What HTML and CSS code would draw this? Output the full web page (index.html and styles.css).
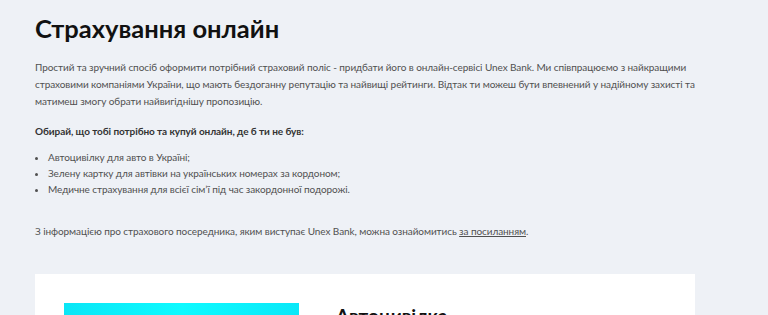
FILE: index.html
```html
<!DOCTYPE html>
<html lang="uk">
<head>
  <meta charset="UTF-8">
  <meta name="viewport" content="width=device-width, initial-scale=1.0">
  <title>Страхування онлайн</title>
  <link rel="stylesheet" href="styles.css">
</head>
<body>
  <div class="container">
    <h1>Страхування онлайн</h1>
    <p class="intro">Простий та зручний спосіб оформити потрібний страховий поліс - придбати його в онлайн-сервісі Unex Bank. Ми співпрацюємо з найкращими страховими компаніями України, що мають бездоганну репутацію та найвищі рейтинги. Відтак ти можеш бути впевнений у надійному захисті та матимеш змогу обрати найвигіднішу пропозицію.</p>

    <p class="lead">Обирай, що тобі потрібно та купуй онлайн, де б ти не був:</p>
    <ul class="list">
      <li>Автоцивілку для авто в Україні;</li>
      <li>Зелену картку для автівки на українських номерах за кордоном;</li>
      <li>Медичне страхування для всієї сім’ї під час закордонної подорожі.</li>
    </ul>

    <p class="note">З інформацією про страхового посередника, яким виступає Unex Bank, можна ознайомитись <a href="#">за посиланням</a>.</p>

    <div class="card">
      <div class="card-image"></div>
      <div class="card-body">
        <h2>Автоцивілка</h2>
      </div>
    </div>
  </div>
</body>
</html>
```

FILE: styles.css
```css
body {
  margin: 0;
  background-color: #eef1f6;
  font-family: Lato, "Noto Sans", Arial, sans-serif;
  color: #505050;
}
.container {
  width: 660px;
  padding: 11px 0 0 35px;
}
h1 {
  margin: 0 0 14px;
  font-size: 25.5px;
  font-weight: 700;
  color: #111;
  line-height: 34px;
}
.intro,
.lead,
.list,
.note {
  font-size: 10px;
  letter-spacing: -0.08px;
}
.intro {
  margin: 0 0 13px;
  line-height: 17px;
}
.lead {
  margin: 0 0 9px;
  font-weight: 700;
  line-height: 17px;
  color: #333;
}
.list {
  margin: 0 0 26px;
  padding-left: 13px;
  line-height: 16px;
}
.note {
  margin: 0 0 34px;
  line-height: 17px;
}
.note a {
  color: #505050;
}
.card {
  display: flex;
  gap: 37px;
  background-color: #fff;
  padding: 29px 29px 0;
  height: 13px;
  overflow: hidden;
}
.card-image {
  flex: none;
  width: 235px;
  height: 120px;
  background: linear-gradient(90deg, #0ae6f6, #0ffaff 50%, #0ae8f8);
}
.card-body h2 {
  margin: 0;
  font-size: 19px;
  font-weight: 700;
  line-height: 26px;
  color: #111;
}
```
